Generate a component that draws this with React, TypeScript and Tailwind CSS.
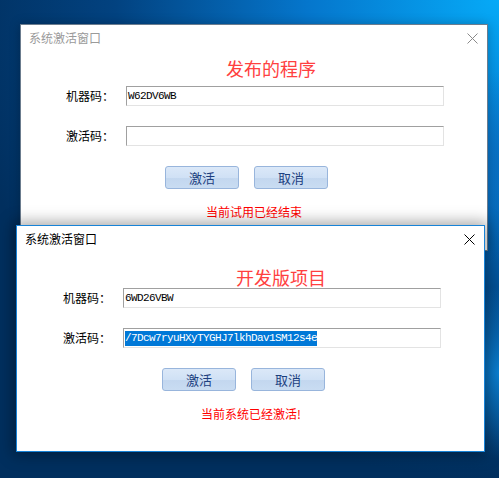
import React from "react";

type DialogProps = {
  active: boolean;
  heading: string;
  headingClass: string;
  code: string;
  activation: string;
  status: string;
  className: string;
  shiftClass: string;
};

function CloseX({ active }: { active: boolean }) {
  return (
    <svg width="11" height="11" viewBox="0 0 11 11" className="mt-[3px]">
      <path
        d="M0.5 0.5 L10.5 10.5 M10.5 0.5 L0.5 10.5"
        stroke={active ? "#000000" : "#8a8a8a"}
        strokeWidth="1"
        fill="none"
      />
    </svg>
  );
}

function Input({ value, selected }: { value: string; selected?: boolean }) {
  return (
    <div className="w-[318px] h-[20px] border border-t-[#a0a0a0] border-l-[#a0a0a0] border-r-[#e3e3e3] border-b-[#e3e3e3] bg-white flex items-center pl-[1px]">
      {value ? (
        <span
          className={`font-['Liberation_Mono',monospace] text-[11px] tracking-[-0.6px] leading-[15px] ${
            selected ? "bg-[#0078d7] text-white" : "text-black"
          }`}
        >
          {value}
        </span>
      ) : null}
    </div>
  );
}

function Button({ label }: { label: string }) {
  return (
    <div className="w-[74px] h-[23px] rounded-[3px] border border-[#98b5dc] bg-[image:linear-gradient(to_bottom,#dbe8f8_0%,#d0e1f5_50%,#c3d7ef_55%,#c9dcf2_100%)] flex items-center justify-center text-[13px] leading-[16px] text-[#1d3f7f]">
      {label}
    </div>
  );
}

function Dialog(p: DialogProps) {
  return (
    <div
      className={`absolute h-[227px] bg-white border flex flex-col font-['Noto_Sans_CJK_SC','Noto_Sans',sans-serif] ${p.className}`}
    >
      <div className="h-[30px] flex items-start justify-between pl-[8px] pr-[9px] pt-[5px] shrink-0">
        <span className={`text-[12px] leading-[16px] ${p.active ? "text-black" : "text-[#9a9a9a]"}`}>
          系统激活窗口
        </span>
        <CloseX active={p.active} />
      </div>
      <div className={p.shiftClass}>
        <div className={p.headingClass}>
          <span className="text-[18px] leading-[20px] text-[#ff4040]">{p.heading}</span>
        </div>
        <div className="flex items-center h-[20px] pl-[45px]">
          <span className="w-[60px] text-[12px] leading-[16px] text-black">机器码：</span>
          <Input value={p.code} />
        </div>
        <div className="flex items-center h-[20px] pl-[45px] mt-[20px]">
          <span className="w-[60px] text-[12px] leading-[16px] text-black">激活码：</span>
          <Input value={p.activation} selected />
        </div>
        <div className="flex items-center pl-[144px] gap-[15px] mt-[20px]">
          <Button label="激活" />
          <Button label="取消" />
        </div>
        <div className="mt-[15px] text-center text-[12px] leading-[16px] text-[#ff0000]">{p.status}</div>
      </div>
    </div>
  );
}

export default function App() {
  return (
    <div className="relative w-[499px] h-[478px] overflow-hidden bg-[#012f5e] bg-[image:radial-gradient(ellipse_14%_18%_at_100%_78%,rgba(12,134,218,0.9)_0%,rgba(12,134,218,0)_100%),radial-gradient(ellipse_10%_20%_at_100%_35%,rgba(10,110,192,0.9)_0%,rgba(10,110,192,0)_100%),radial-gradient(ellipse_110%_100%_at_100%_0%,#06aaf7_0%,#0576cc_35%,#024280_70%,#012f5e_100%)]">
      <Dialog
        active={false}
        heading="发布的程序"
        headingClass="h-[31px] pt-[2px] pl-[205px]"
        code="W62DV6WB"
        activation=""
        status="当前试用已经结束"
        className="left-[20px] top-[24px] w-[468px] border-[#6b7c8e] shadow-[0_0_10px_rgba(0,0,0,0.25)]"
        shiftClass=""
      />
      <Dialog
        active={true}
        heading="开发版项目"
        headingClass="h-[32px] pt-[10px] pl-[218px]"
        code="6WD26VBW"
        activation="/7Dcw7ryuHXyTYGHJ7lkhDav1SM12s4e"
        status="当前系统已经激活!"
        className="left-[16px] top-[225px] w-[469px] border-[#1883d7] shadow-[0_0_14px_3px_rgba(0,0,0,0.35)]"
        shiftClass="pl-[1px]"
      />
    </div>
  );
}
